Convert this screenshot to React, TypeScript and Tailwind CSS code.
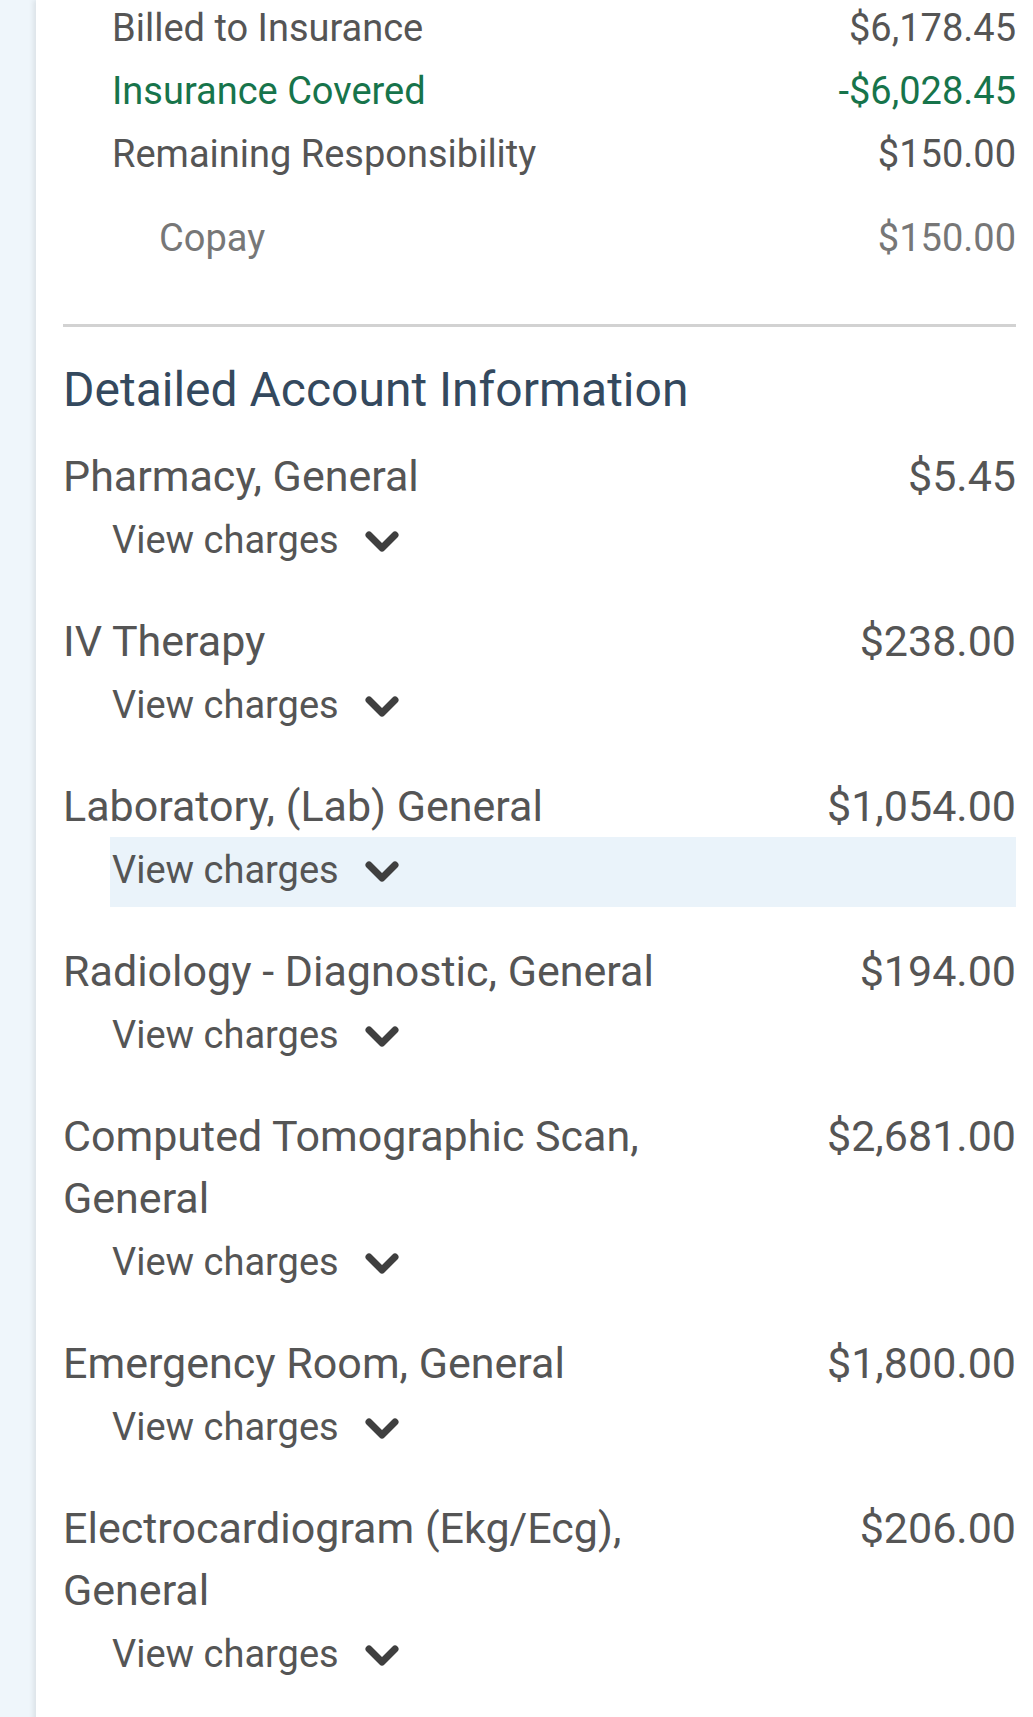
const summary = [
  { label: "Billed to Insurance", value: "$6,178.45", green: false },
  { label: "Insurance Covered", value: "-$6,028.45", green: true },
  { label: "Remaining Responsibility", value: "$150.00", green: false },
];

const accounts = [
  { name: "Pharmacy, General", amount: "$5.45" },
  { name: "IV Therapy", amount: "$238.00" },
  { name: "Laboratory, (Lab) General", amount: "$1,054.00", active: true },
  { name: "Radiology - Diagnostic, General", amount: "$194.00" },
  { name: "Computed Tomographic Scan, General", amount: "$2,681.00" },
  { name: "Emergency Room, General", amount: "$1,800.00" },
  { name: "Electrocardiogram (Ekg/Ecg), General", amount: "$206.00" },
];

function Chevron() {
  return (
    <svg width="34" height="21" viewBox="0 0 34 21" className="shrink-0">
      <path
        d="M4 4 L17 17 L30 4"
        fill="none"
        stroke="#3f3f3f"
        strokeWidth="7"
        strokeLinecap="round"
        strokeLinejoin="round"
      />
    </svg>
  );
}

export default function App() {
  return (
    <div
      className="flex min-h-[1780px] bg-[#eff6fb] pl-[36px]"
      style={{ fontFamily: "Roboto, 'Noto Sans', sans-serif" }}
    >
      <div className="flex-1 bg-white shadow-[-3px_0_5px_rgba(0,0,0,0.08)] pl-[27px] pr-[17px]">
        <div className="-mt-[3px] pl-[49px]">
          {summary.map((row) => (
            <div
              key={row.label}
              className={`flex justify-between text-[38px] leading-[63px] ${
                row.green ? "text-[#17744b]" : "text-[#555555]"
              }`}
            >
              <span>{row.label}</span>
              <span>{row.value}</span>
            </div>
          ))}
          <div className="mt-[23px] flex justify-between pl-[47px] text-[38px] leading-[59px] text-[#777777]">
            <span>Copay</span>
            <span>$150.00</span>
          </div>
        </div>

        <div className="mt-[56px] h-[3px] bg-[#d2d2d2]" />

        <h2 className="mt-[35px] text-[48px] leading-[56px] font-normal text-[#34495e]">
          Detailed Account Information
        </h2>

        <div className="mt-[27px] flex flex-col gap-[33px]">
          {accounts.map((a) => (
            <div key={a.name}>
              <div className="flex justify-between text-[43px] leading-[62px] text-[#555555]">
                <span className="w-[680px]">{a.name}</span>
                <span className="text-right">{a.amount}</span>
              </div>
              <div
                className={`ml-[47px] flex h-[70px] items-start gap-[26px] pl-[2px] pt-[4px] text-[38px] leading-[58px] text-[#555555] ${
                  a.active ? "bg-[#eaf3fa]" : ""
                }`}
              >
                <span>View charges</span>
                <span className="mt-[20px]">
                  <Chevron />
                </span>
              </div>
            </div>
          ))}
        </div>
      </div>
    </div>
  );
}
